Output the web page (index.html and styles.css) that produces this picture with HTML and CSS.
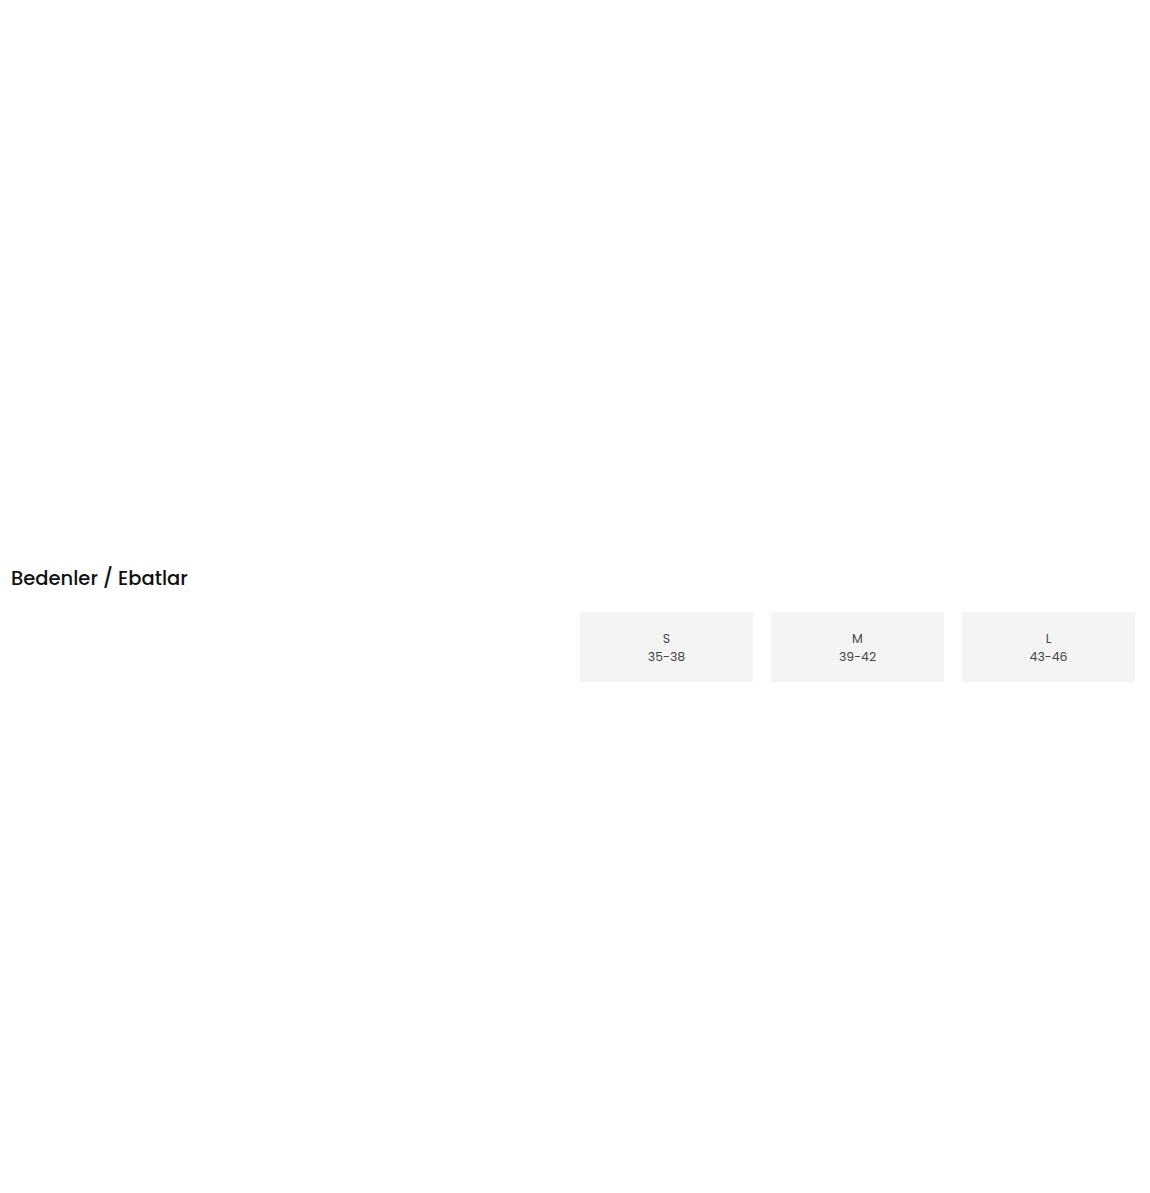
FILE: index.html
```html
<!DOCTYPE html>
<html lang="tr">
<head>
    <meta charset="UTF-8">
    <meta name="viewport" content="width=device-width, initial-scale=1.0">
    <title>Bedenler / Ebatlar</title>
    <link rel="stylesheet" href="styles.css">
</head>
<body>

    <!-- Size table -->
    <div class="sizes">
        <h2 class="sizes-title">Bedenler / Ebatlar</h2>

        <div class="sizes-row">
            <div class="sizes-spacer"></div>
            <ul class="size-list">
                <li class="size-item">
                    <span>S</span>
                    <span>35-38</span>
                </li>
                <li class="size-item">
                    <span>M</span>
                    <span>39-42</span>
                </li>
                <li class="size-item">
                    <span>L</span>
                    <span>43-46</span>
                </li>
            </ul>
        </div>
    </div>

</body>
</html>
```

FILE: styles.css
```css
body {
    font-family: 'Poppins', 'DejaVu Sans', sans-serif;
    background-color: #fff;
    margin: 0;
    padding: 0;
}

.sizes {
    padding: 564px 15px 0 11px;
}

.sizes-title {
    font-size: 19.5px;
    font-weight: 500;
    line-height: 30px;
    margin: 0;
    color: #111;
}

.sizes-row {
    display: flex;
    margin-top: 18px;
}

.sizes-spacer {
    flex: 1;
}

.size-list {
    display: grid;
    grid-template-columns: repeat(3, 173px);
    gap: 18px;
    margin: 0;
    padding: 0;
    list-style: none;
}

.size-item {
    background-color: #f4f4f4;
    height: 70px;
    padding-top: 2px;
    box-sizing: border-box;
    display: flex;
    flex-direction: column;
    justify-content: center;
    align-items: center;
    font-size: 12.5px;
    line-height: 18px;
    color: #444;
}
```
